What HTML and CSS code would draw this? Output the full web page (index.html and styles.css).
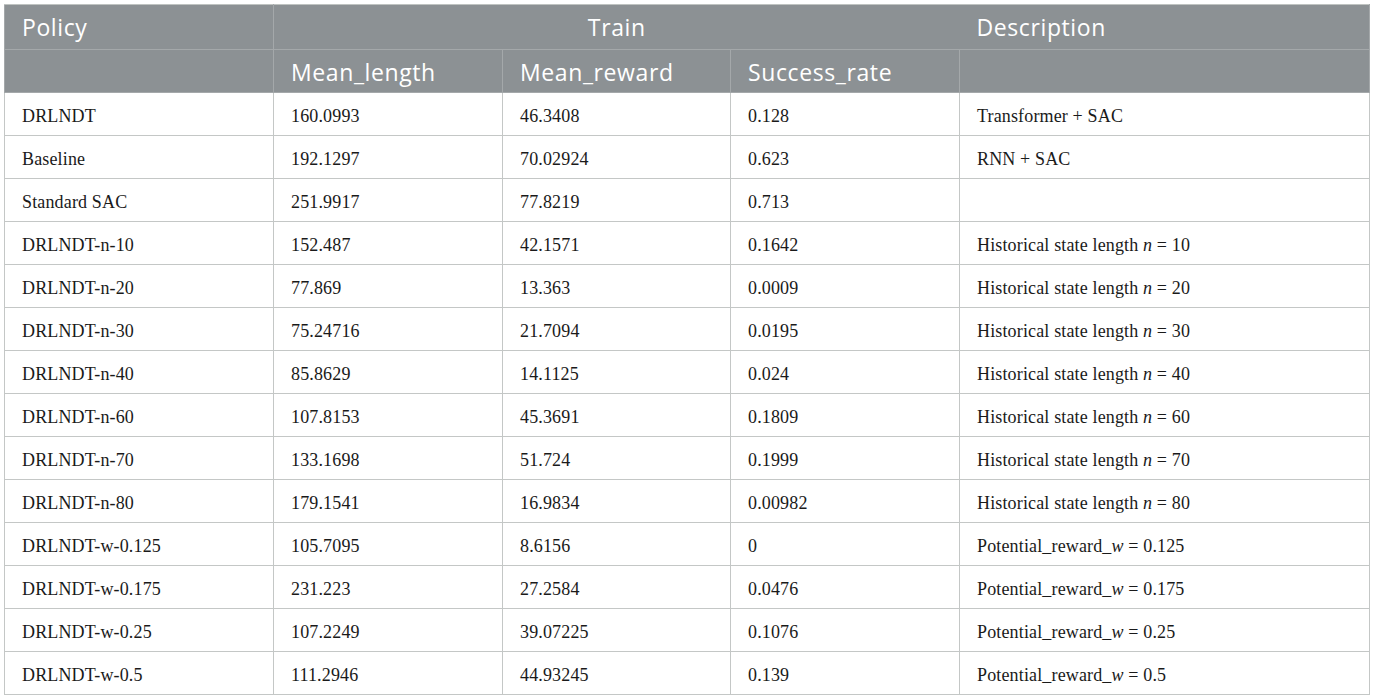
FILE: index.html
```html
<!DOCTYPE html>
<html>
<head>
<meta charset="utf-8">
<link rel="stylesheet" href="styles.css">
</head>
<body>
<table class="data">
  <colgroup>
    <col class="w-policy">
    <col class="w-num">
    <col class="w-num2">
    <col class="w-num">
    <col class="w-desc">
  </colgroup>
  <thead>
    <tr class="h1">
      <th>Policy</th>
      <th class="train" colspan="3">Train</th>
      <th class="desc">Description</th>
    </tr>
    <tr class="h2">
      <th></th>
      <th>Mean_length</th>
      <th>Mean_reward</th>
      <th>Success_rate</th>
      <th></th>
    </tr>
  </thead>
  <tbody>
    <tr><td>DRLNDT</td><td>160.0993</td><td>46.3408</td><td>0.128</td><td>Transformer + SAC</td></tr>
    <tr><td>Baseline</td><td>192.1297</td><td>70.02924</td><td>0.623</td><td>RNN + SAC</td></tr>
    <tr><td>Standard SAC</td><td>251.9917</td><td>77.8219</td><td>0.713</td><td></td></tr>
    <tr><td>DRLNDT-n-10</td><td>152.487</td><td>42.1571</td><td>0.1642</td><td>Historical state length <i>n</i> = 10</td></tr>
    <tr><td>DRLNDT-n-20</td><td>77.869</td><td>13.363</td><td>0.0009</td><td>Historical state length <i>n</i> = 20</td></tr>
    <tr><td>DRLNDT-n-30</td><td>75.24716</td><td>21.7094</td><td>0.0195</td><td>Historical state length <i>n</i> = 30</td></tr>
    <tr><td>DRLNDT-n-40</td><td>85.8629</td><td>14.1125</td><td>0.024</td><td>Historical state length <i>n</i> = 40</td></tr>
    <tr><td>DRLNDT-n-60</td><td>107.8153</td><td>45.3691</td><td>0.1809</td><td>Historical state length <i>n</i> = 60</td></tr>
    <tr><td>DRLNDT-n-70</td><td>133.1698</td><td>51.724</td><td>0.1999</td><td>Historical state length <i>n</i> = 70</td></tr>
    <tr><td>DRLNDT-n-80</td><td>179.1541</td><td>16.9834</td><td>0.00982</td><td>Historical state length <i>n</i> = 80</td></tr>
    <tr><td>DRLNDT-w-0.125</td><td>105.7095</td><td>8.6156</td><td>0</td><td>Potential_reward_<i>w</i> = 0.125</td></tr>
    <tr><td>DRLNDT-w-0.175</td><td>231.223</td><td>27.2584</td><td>0.0476</td><td>Potential_reward_<i>w</i> = 0.175</td></tr>
    <tr><td>DRLNDT-w-0.25</td><td>107.2249</td><td>39.07225</td><td>0.1076</td><td>Potential_reward_<i>w</i> = 0.25</td></tr>
    <tr><td>DRLNDT-w-0.5</td><td>111.2946</td><td>44.93245</td><td>0.139</td><td>Potential_reward_<i>w</i> = 0.5</td></tr>
  </tbody>
</table>
</body>
</html>
```

FILE: styles.css
```css
html, body {
  margin: 0;
  padding: 0;
  background: #ffffff;
}

body {
  padding: 4px 0 0 4px;
}

.data {
  border-collapse: collapse;
  table-layout: fixed;
  width: 1366px;
  border: 1px solid #bfc3c1;
}

.w-policy { width: 269px; }
.w-num { width: 229px; }
.w-num2 { width: 228px; }
.w-desc { width: 410px; }

.data th {
  background: #8c9194;
  color: #ffffff;
  font-family: "Open Sans", "Liberation Sans", sans-serif;
  font-weight: 400;
  font-size: 23px;
  letter-spacing: 0.6px;
  text-align: left;
  padding: 0 0 0 17px;
  border: 1px solid #a4a8aa;
  white-space: nowrap;
}

.data tr.h1 th {
  height: 44px;
  border-top: 1px solid #bfc3c1;
}

.data tr.h2 th {
  height: 41px;
  padding-top: 1px;
}

.data th.train {
  text-align: center;
  padding: 0;
  border-right: none;
}

.data th.desc {
  border-left: none;
}

.data td {
  font-family: "Liberation Serif", "Times New Roman", serif;
  font-size: 18px;
  letter-spacing: 0.15px;
  color: #1a1a1a;
  height: 38px;
  padding: 4px 0 0 17px;
  border: 1px solid #c4c7c6;
  vertical-align: middle;
  white-space: nowrap;
}

.data td i {
  font-style: italic;
}
```
